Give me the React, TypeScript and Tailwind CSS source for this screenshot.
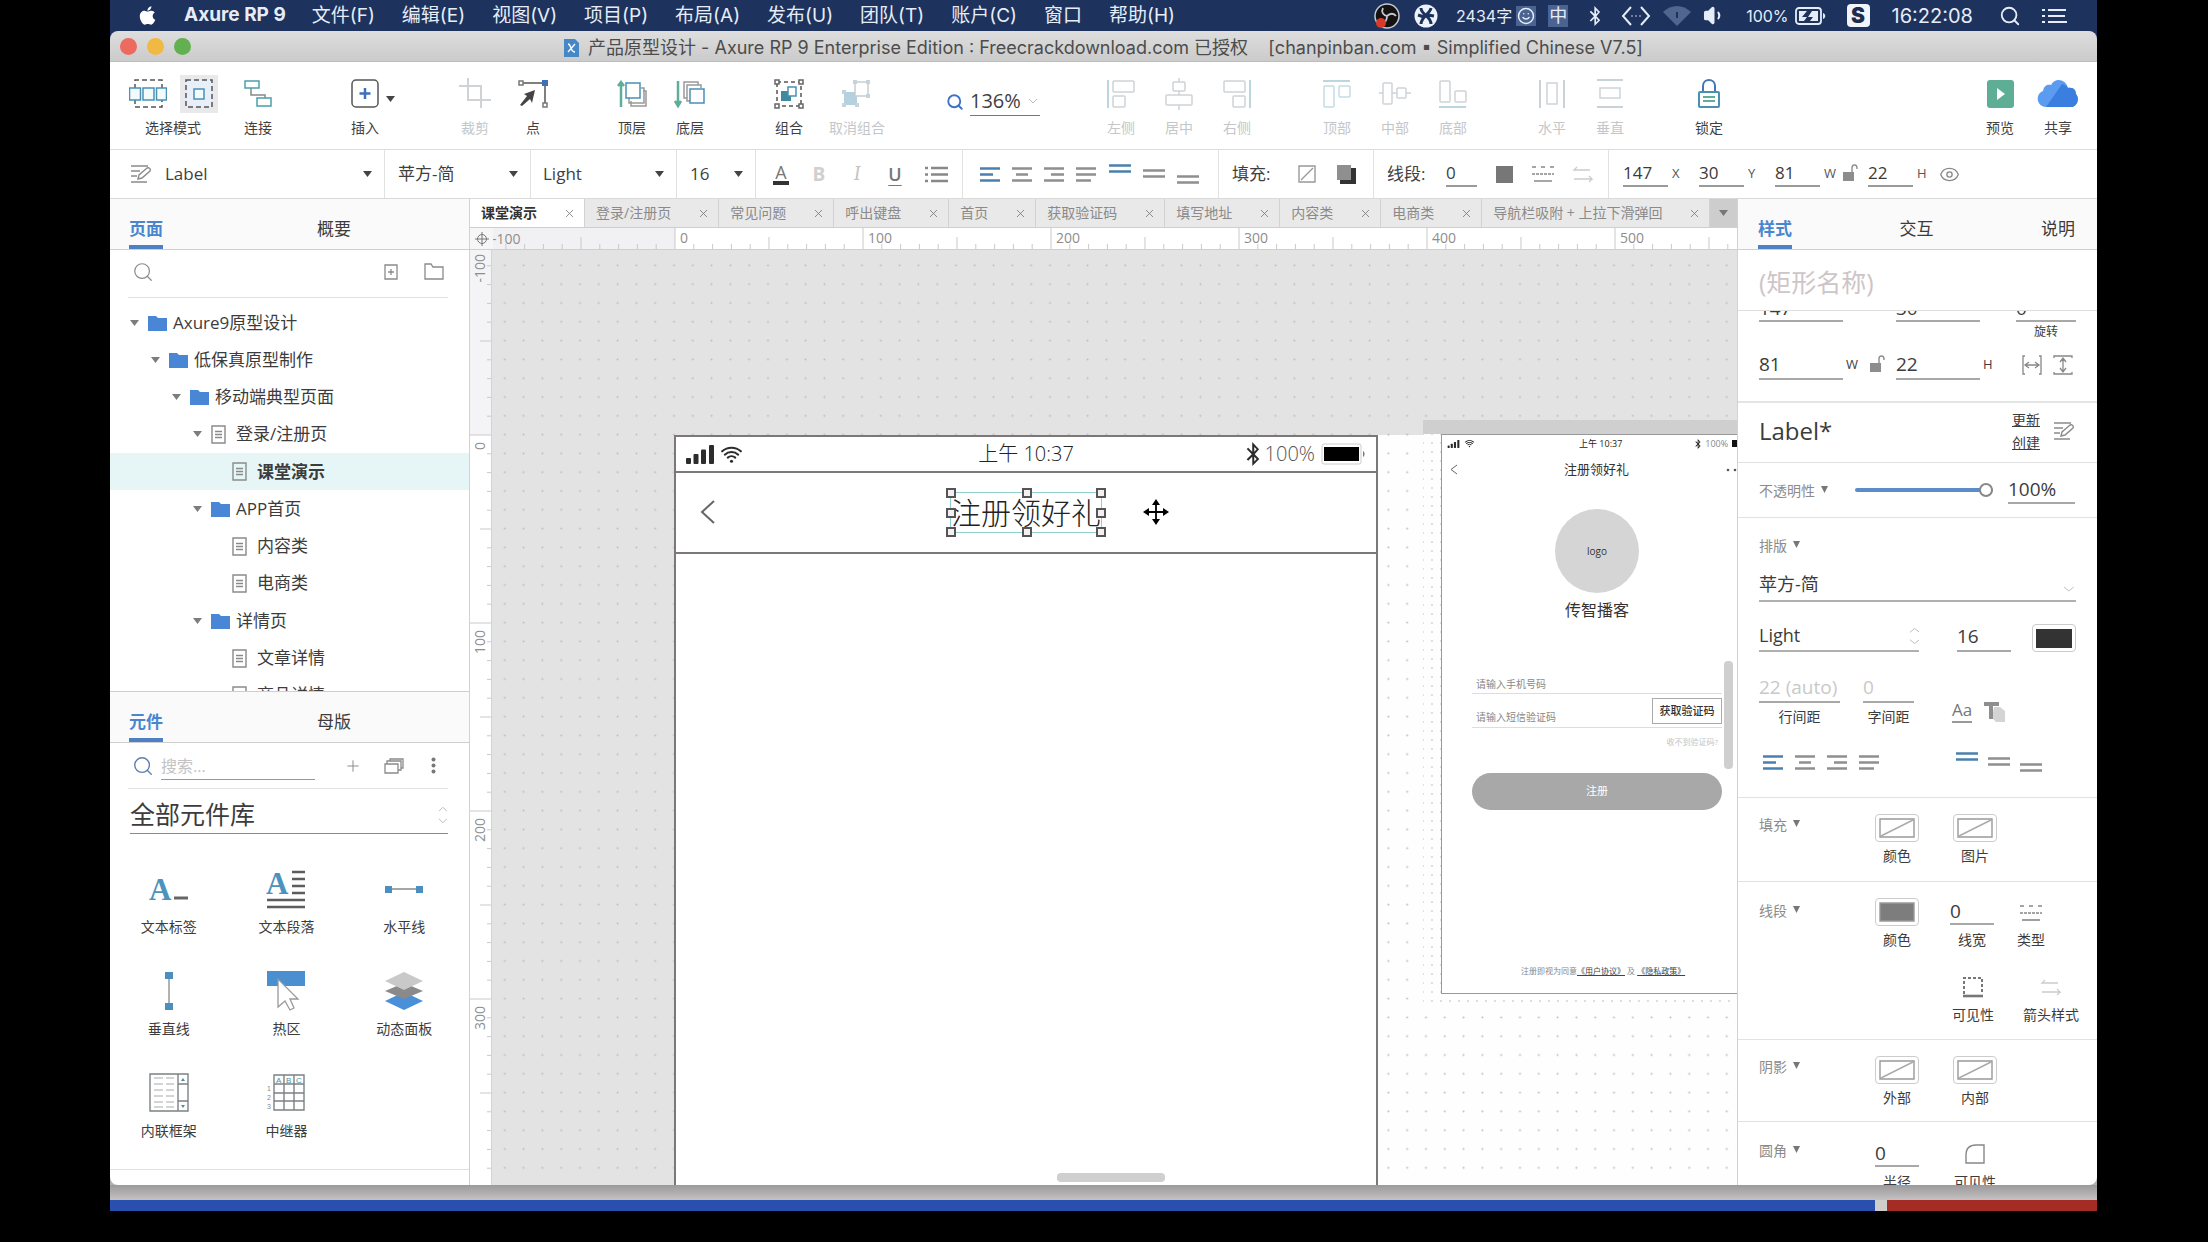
import React from 'react';
import { FaApple, FaBluetoothB } from 'react-icons/fa';
import { IoWifi } from 'react-icons/io5';
import { Search, Volume1, Plus, X, Eye, Smile } from 'lucide-react';

const menus = ['文件(F)', '编辑(E)', '视图(V)', '项目(P)', '布局(A)', '发布(U)', '团队(T)', '账户(C)', '窗口', '帮助(H)'];

const pageTabs = ['课堂演示', '登录/注册页', '常见问题', '呼出键盘', '首页', '获取验证码', '填写地址', '内容类', '电商类', '导航栏吸附 + 上拉下滑弹回'];

type TreeNode = { label: string; level: number; kind: 'folder' | 'page'; open?: boolean; active?: boolean };

const tree: TreeNode[] = [
  { label: 'Axure9原型设计', level: 0, kind: 'folder', open: true },
  { label: '低保真原型制作', level: 1, kind: 'folder', open: true },
  { label: '移动端典型页面', level: 2, kind: 'folder', open: true },
  { label: '登录/注册页', level: 3, kind: 'page', open: true },
  { label: '课堂演示', level: 4, kind: 'page', active: true },
  { label: 'APP首页', level: 3, kind: 'folder', open: true },
  { label: '内容类', level: 4, kind: 'page' },
  { label: '电商类', level: 4, kind: 'page' },
  { label: '详情页', level: 3, kind: 'folder', open: true },
  { label: '文章详情', level: 4, kind: 'page' },
  { label: '商品详情', level: 4, kind: 'page' },
];

// pixels per 10 canvas units at 136%
const STEP = 18.8;

const Caret = ({ className = 'text-[#444]' }: { className?: string }) => (
  <svg width="9" height="6" viewBox="0 0 9 6" className={`shrink-0 ${className}`}>
    <path d="M0 0h9L4.500 6z" fill="currentColor" />
  </svg>
);

const MenuBar = () => (
  <header className="flex h-[31px] shrink-0 items-center bg-[#1d325c] pl-[27px] pr-[29px] font-['Inter','Noto_Sans_CJK_SC',sans-serif] text-[19px] text-[#e6edf8]">
    <FaApple size={21} className="mr-[26px] text-white" />
    <b className="mr-[26px] whitespace-nowrap font-bold">Axure RP 9</b>
    <nav className="flex gap-[27px]">
      {menus.map((m) => (
        <button key={m} className="whitespace-nowrap leading-none">{m}</button>
      ))}
    </nav>
    <div className="ml-auto flex items-center">
      <svg width="26" height="26" viewBox="0 0 26 26">
        <circle cx="13" cy="13" r="12" fill="#151212" stroke="#c5c9d2" strokeWidth="1.500" />
        <path d="M13 13c-4-1-6-4-4-8M13 13c3-3 7-3 9 0M13 13c0 4-2 7-6 7" stroke="#c5c9d2" strokeWidth="1.800" fill="none" />
        <circle cx="7" cy="20" r="5" fill="#d8392b" />
      </svg>
      <svg width="24" height="24" viewBox="0 0 24 24" className="ml-[14px]">
        <circle cx="12" cy="12" r="11.500" fill="#eef3fb" />
        <path d="M7 4c0 7 10 8 10 16M17 4C16 10 7 13 7 20M4 11l6 2M14 11l6 1" stroke="#1d325c" strokeWidth="3" fill="none" />
      </svg>
      <span className="ml-[18px] text-[16px]">2434字</span>
      <span className="ml-[4px] bg-[#4b6391] p-px"><Smile size={18} /></span>
      <span className="ml-[12px] bg-[#4b6391] px-px text-[18px] leading-[22px]">中</span>
      <FaBluetoothB size={20} className="ml-[17px]" />
      <svg width="30" height="20" viewBox="0 0 30 20" className="ml-[16px]">
        <path d="M10 1L2 10l8 9M20 1l8 9-8 9" stroke="currentColor" strokeWidth="2" fill="none" />
        <path d="M10 10h10" stroke="#6d7fa5" strokeWidth="2" strokeDasharray="2 2" />
      </svg>
      <svg width="28" height="20" viewBox="0 0 28 20" className="ml-[12px]">
        <path d="M0 6C8-2 20-2 28 6L14 20z" fill="#52658f" />
        <path d="M13 6h2v6h-2z" fill="#1d325c" />
      </svg>
      <Volume1 size={23} fill="currentColor" className="ml-[12px]" />
      <span className="ml-[20px] text-[16px]">100%</span>
      <svg width="31" height="18" viewBox="0 0 31 18" className="ml-[6px]">
        <rect x="1" y="1" width="25" height="16" rx="3" fill="none" stroke="currentColor" strokeWidth="1.800" />
        <path d="M28 6v6c3-1 3-5 0-6M4 4h8l-5 6h5l-3 4H4zM23 4h-6l-4 6h5l-3 4h8z" fill="currentColor" />
      </svg>
      <span className="ml-[21px] w-[23px] rounded-[4px] bg-[#f1f5fb] text-center text-[21px] font-black leading-[23px] text-[#1d2c4c]">S</span>
      <span className="ml-[22px] text-[20px]">16:22:08</span>
      <Search size={22} className="ml-[26px]" />
      <svg width="26" height="16" viewBox="0 0 26 16" className="ml-[21px]">
        <path d="M0 2h3M6 2h18M0 8h3M6 8h17M0 14h3M6 14h19" stroke="currentColor" strokeWidth="2.200" />
      </svg>
    </div>
  </header>
);

const TitleBar = () => (
  <div className="flex h-[31px] shrink-0 items-center border-b border-[#bdbdbd] bg-gradient-to-b from-[#dedede] to-[#cbcbcb] px-[10px]">
    <div className="flex w-20 gap-[10px]">
      <span className="h-[17px] w-[17px] rounded-full bg-[#ec6a5e]" />
      <span className="h-[17px] w-[17px] rounded-full bg-[#f0b944]" />
      <span className="h-[17px] w-[17px] rounded-full bg-[#62b04f]" />
    </div>
    <h1 className="flex flex-1 items-center justify-center gap-[9px] whitespace-pre pt-[3px] font-['Inter','Noto_Sans_CJK_SC',sans-serif] text-[18px] leading-6 text-[#4c4c4c]">
      <svg width="15" height="19" viewBox="0 0 15 19">
        <path d="M0 1h11l4 4v14H0z" fill="#4687c8" />
        <path d="M4 6c1 0 2 1 3 4s2 4 4 4M11 6L4 14" stroke="#fff" strokeWidth="1.300" fill="none" />
      </svg>
      {'产品原型设计 - Axure RP 9 Enterprise Edition : Freecrackdownload.com 已授权    [chanpinban.com ▪ Simplified Chinese V7.5]'}
    </h1>
    <div className="w-20" />
  </div>
);

const Tool = ({ label, off, wide, children }: { label: string; off?: boolean; wide?: boolean; children: React.ReactNode }) => (
  <button disabled={off} className={`flex shrink-0 flex-col items-center ${wide ? 'w-[78px]' : 'w-[58px]'} ${off ? 'text-[#c4c7ca]' : 'text-[#3f3f3f]'}`}>
    <svg width="32" height="32" viewBox="0 0 32 32" fill="none" strokeWidth="1.500" className="h-[38px]">{children}</svg>
    <span className="mt-[5px] whitespace-nowrap text-[14px] leading-5">{label}</span>
  </button>
);

const Toolbar = () => (
  <div className="flex h-[88px] shrink-0 items-start gap-[41px] border-b border-[#dedede] bg-white pl-[7px] pr-[10px] pt-[13px]">
    <div className="flex shrink-0">
      <div className="flex w-[112px] flex-col items-center text-[#3f3f3f]">
        <div className="flex gap-[13px]">
          <button aria-label="相交选中">
            <svg width="38" height="38" viewBox="0 0 38 38" fill="none" strokeWidth="1.500">
              <path d="M6 14V5h27v9M6 24v8h27v-8" stroke="#555" strokeDasharray="5 3" />
              <path d="M0.500 13h11v12h-11zM14 13h11v12h-11zM27.500 13h10v12h-10z" stroke="#4a90b5" fill="#f3fafc" />
            </svg>
          </button>
          <button aria-label="包含选中" className="bg-[#e9e9ec]">
            <svg width="38" height="38" viewBox="0 0 38 38" fill="none" strokeWidth="1.500">
              <rect x="6" y="5" width="26" height="27" fill="#e9eff9" stroke="#555" strokeDasharray="5 3" />
              <rect x="14" y="14" width="10" height="10" stroke="#4a90b5" fill="#f3fafc" />
            </svg>
          </button>
        </div>
        <span className="mt-[5px] text-[14px] leading-5">选择模式</span>
      </div>
      <Tool label="连接">
        <path d="M9 9v8h14v5" stroke="#888" />
        <path d="M3 3h14v7H3zM15 20h14v8H15z" stroke="#4c9fa8" fill="#fff" />
      </Tool>
    </div>
    <div className="ml-[8px] flex shrink-0">
      <Tool label="插入">
        <rect x="3" y="2" width="26" height="27" rx="4" stroke="#555" />
        <path d="M16 10v11M10.500 15.500h11" stroke="#3f6fb8" strokeWidth="2.500" />
      </Tool>
      <div className="-ml-2 flex h-12 items-center"><Caret /></div>
    </div>
    <div className="ml-[10px] flex shrink-0">
      <Tool label="裁剪" off>
        <path d="M9 0v22h23M0 8h22v22" stroke="#cfd3d6" strokeWidth="2" />
      </Tool>
      <Tool label="点">
        <path d="M4 5h24v21" stroke="#555" />
        <path d="M2 3h4v4H2zM26 25h4v4h-4z" stroke="#777" fill="#fff" />
        <path d="M25 2h6v6h-6z" fill="#3f6fb8" />
        <path d="M18 12L7 16l3 2-7 9 2 1 8-7 2 4z" fill="#444" />
      </Tool>
    </div>
    <div className="flex shrink-0">
      <Tool label="顶层">
        <path d="M5 29V5M2 8l3-4 3 4" stroke="#5fae9a" strokeWidth="2.500" />
        <path d="M15 23v5h15V13h-3M13 20v5h15V10h-3" stroke="#999" />
        <path d="M10 5h14v15H10z" stroke="#4a90b5" fill="#fff" />
      </Tool>
      <Tool label="底层">
        <path d="M4 3v23M1 23l3 5 3-5" stroke="#5fae9a" strokeWidth="2.500" />
        <path d="M13 20h-3V4h14v3M16 23h-3V7h14v3" stroke="#999" />
        <path d="M16 11h14v14H16z" stroke="#4a90b5" fill="#fff" />
      </Tool>
    </div>
    <div className="flex shrink-0">
      <Tool label="组合">
        <path d="M4 4h24v24H4z" stroke="#555" strokeDasharray="4 3" />
        <path d="M2 2h4v4H2zM26 2h4v4h-4zM2 26h4v4H2zM26 26h4v4h-4z" stroke="#666" fill="#fff" />
        <path d="M8 13h10v10H8z" fill="#3f8aa0" />
        <path d="M15 9h8v9h-8z" stroke="#4a90b5" fill="#fff" />
      </Tool>
      <Tool label="取消组合" off wide>
        <path d="M3 14h13v13H3z" fill="#b5d0de" />
        <path d="M14 4h13v14H14z" stroke="#c9cdd0" fill="#fff" />
        <path d="M12 2h4v4h-4zM25 2h4v4h-4zM25 16h4v4h-4zM1 12h4v4H1zM1 25h4v4H1zM14 25h4v4h-4z" fill="#c5d3da" />
      </Tool>
    </div>
    <label className="ml-[9px] mt-[12px] flex shrink-0 items-center gap-[6px] text-[#3f3f3f]">
      <Search size={18} className="text-[#3f72c0]" strokeWidth={2.500} />
      <span className="flex w-[70px] items-center border-b border-[#777]">
        <input aria-label="缩放" defaultValue="136%" className="h-[28px] w-[58px] bg-transparent text-[20px] outline-none" />
        <svg width="10" height="6" viewBox="0 0 10 6"><path d="M1 1l4 4 4-4" stroke="#bbb" fill="none" /></svg>
      </span>
    </label>
    <div className="ml-[11px] flex shrink-0">
      <Tool label="左侧" off>
        <path d="M3 2v28" stroke="#bcd6df" strokeWidth="2" />
        <rect x="8" y="3" width="21" height="11" rx="1" stroke="#cfd3d6" /><rect x="8" y="18" width="12" height="11" rx="1" stroke="#cfd3d6" />
      </Tool>
      <Tool label="居中" off>
        <path d="M16 0v32" stroke="#c3d4da" />
        <rect x="10" y="4" width="12" height="9" rx="1" stroke="#cfd3d6" fill="#fff" /><rect x="3" y="17" width="26" height="10" rx="1" stroke="#cfd3d6" fill="#fff" />
      </Tool>
      <Tool label="右侧" off>
        <path d="M29 2v28" stroke="#bcd6df" strokeWidth="2" />
        <rect x="3" y="3" width="21" height="11" rx="1" stroke="#cfd3d6" /><rect x="12" y="18" width="12" height="11" rx="1" stroke="#cfd3d6" />
      </Tool>
    </div>
    <div className="ml-px flex shrink-0">
      <Tool label="顶部" off>
        <path d="M2 3h27" stroke="#bcd6df" strokeWidth="2" />
        <rect x="3" y="8" width="10" height="21" rx="1" stroke="#c5dbe3" /><rect x="18" y="8" width="11" height="11" rx="1" stroke="#c5dbe3" />
      </Tool>
      <Tool label="中部" off>
        <path d="M0 15h32" stroke="#c3d4da" />
        <rect x="4" y="5" width="9" height="21" rx="1" stroke="#cfd3d6" fill="#fff" /><rect x="18" y="10" width="9" height="10" rx="1" stroke="#cfd3d6" fill="#fff" />
      </Tool>
      <Tool label="底部" off>
        <path d="M2 29h27" stroke="#bcd6df" strokeWidth="2" />
        <rect x="3" y="3" width="10" height="21" rx="1" stroke="#cfd3d6" /><rect x="18" y="13" width="11" height="11" rx="1" stroke="#cfd3d6" />
      </Tool>
    </div>
    <div className="flex shrink-0">
      <Tool label="水平" off>
        <path d="M4 2v28M28 2v28" stroke="#c9d2d6" strokeWidth="2" />
        <rect x="11" y="5" width="10" height="21" stroke="#cfd3d6" />
      </Tool>
      <Tool label="垂直" off>
        <path d="M3 2h26M3 29h26" stroke="#c9d2d6" strokeWidth="2" />
        <rect x="6" y="10" width="20" height="10" stroke="#cfd3d6" />
      </Tool>
    </div>
    <Tool label="锁定">
      <path d="M10 14V8c0-8 12-8 12 0v6" stroke="#4177b5" strokeWidth="2" />
      <rect x="6" y="14" width="20" height="15" rx="1" stroke="#4a90b5" strokeWidth="2" />
      <path d="M10 19h12M10 23h12" stroke="#5fae9a" strokeWidth="2" />
    </Tool>
    <div className="ml-auto flex shrink-0">
      <Tool label="预览">
        <rect x="3" y="2" width="27" height="28" rx="3" fill="#5dae94" />
        <path d="M13 10v12l8-6z" fill="#fff" />
      </Tool>
      <button className="flex w-[58px] flex-col items-center text-[#3f3f3f]">
        <svg width="42" height="38" viewBox="0 0 42 38">
          <path d="M9 32C-2 31-1 18 6 16c1-6 5-7 8-6 4-8 15-6 17 3 6-1 8 3 8 6 4 5 1 12-4 13z" fill="#5b9cf0" />
          <path d="M9 32L25 9c3 1 5 2 6 4 6-1 8 3 8 6 4 5 1 12-4 13z" fill="#3a7fdf" />
        </svg>
        <span className="mt-[5px] text-[14px] leading-5">共享</span>
      </button>
    </div>
  </div>
);

const FormatSelect = ({ label, value, className }: { label: string; value: string; className: string }) => (
  <div className={`relative flex h-full shrink-0 items-center border-r border-[#e2e2e2] pr-3 ${className}`}>
    <select aria-label={label} defaultValue={value} className="w-full appearance-none bg-transparent text-[17px] text-[#3f3f3f] outline-none">
      <option>{value}</option>
    </select>
    <Caret />
  </div>
);

const EditStyleIcon = () => (
  <svg width="21" height="20" viewBox="0 0 21 20" fill="none" stroke="#8b8b8b" strokeWidth="1.400" className="shrink-0">
    <path d="M1 2h17M1 7h9M1 12h6M1 18h16M8 15l1-4 8-7c2-1 4 1 3 3l-8 7z" />
  </svg>
);

const lineIcons = {
  left: 'M0 1.500h20M0 7.500h13M0 13.500h20',
  center: 'M0 1.500h20M4 7.500h12M0 13.500h20',
  right: 'M0 1.500h20M7 7.500h13M0 13.500h20',
  justify: 'M0 1.500h20M0 7.500h20M0 13.500h15',
  top: 'M0 1.500h22M0 7.500h22',
  middle: 'M0 6.500h22M0 12.500h22',
  bottom: 'M0 12.500h22M0 18.500h22',
};

const AlignButton = ({ kind, label, on }: { kind: keyof typeof lineIcons; label: string; on?: boolean }) => {
  const vertical = kind === 'top' || kind === 'middle' || kind === 'bottom';
  return (
    <button aria-label={label} className={on ? 'text-[#4a80ae]' : 'text-[#8f8f8f]'}>
      <svg width={vertical ? 22 : 20} height={vertical ? 20 : 15} viewBox={vertical ? '0 0 22 20' : '0 0 20 15'}>
        <path d={lineIcons[kind]} stroke="currentColor" strokeWidth="2.600" fill="none" />
      </svg>
    </button>
  );
};

const Unlock = () => (
  <svg width="15" height="20" viewBox="0 0 15 20" className="shrink-0">
    <path d="M0 8h11v9H0z" fill="#8d8d8d" />
    <path d="M9 8V4c0-4 5-4 5 0v1" stroke="#8d8d8d" fill="none" strokeWidth="1.400" />
  </svg>
);

const DashLines = () => (
  <svg width="22" height="18" viewBox="0 0 22 18" stroke="#888" strokeWidth="1.600">
    <path d="M0 2h22" strokeDasharray="4 5" /><path d="M0 9h22" strokeDasharray="3 1" /><path d="M2 16h18" />
  </svg>
);

const Arrows = () => (
  <svg width="22" height="18" viewBox="0 0 22 18" stroke="#ccc" strokeWidth="1.300" fill="none">
    <path d="M18 5H2l3-3M2 14h18l-3-3M20 14l-3 3" />
  </svg>
);

const BarField = ({ label, value }: { label: string; value: string }) => (
  <label className="flex shrink-0 items-center gap-1 text-[13px] text-[#555]">
    <input defaultValue={value} className="h-[25px] w-[45px] border-b-2 border-[#9a9a9a] bg-transparent text-[17px] text-[#3a3a3a] outline-none" />
    <span className="w-[12px]">{label}</span>
  </label>
);

const FormatBar = () => (
  <div className="flex h-[49px] shrink-0 items-center border-b border-[#d9d9d9] bg-white">
    <div className="flex h-full shrink-0 items-center pl-[20px]"><EditStyleIcon /></div>
    <FormatSelect label="样式" value="Label" className="w-[234px] pl-[14px]" />
    <FormatSelect label="字体" value="苹方-简" className="w-[146px] pl-[13px]" />
    <FormatSelect label="字重" value="Light" className="w-[146px] pl-[12px]" />
    <FormatSelect label="字号" value="16" className="w-[79px] pl-[13px]" />
    <div className="flex h-full w-[207px] shrink-0 items-center justify-between border-r border-[#e2e2e2] pl-[17px] pr-[14px]">
      <button aria-label="文字颜色" className="w-[16px] border-b-4 border-[#333] text-[18px] leading-[17px] text-[#777]">A</button>
      <button className="w-4 text-[19px] font-bold text-[#d0d0d0]">B</button>
      <button className="w-4 font-serif text-[20px] italic text-[#c4c4c4]">I</button>
      <button className="w-4 text-[18px] font-semibold leading-5 text-[#777] underline underline-offset-4">U</button>
      <button aria-label="列表">
        <svg width="23" height="17" viewBox="0 0 23 17" stroke="#888" strokeWidth="2.400">
          <path d="M0 2h3M6 2h17M0 8.500h3M6 8.500h17M0 15h3M6 15h17" />
        </svg>
      </button>
    </div>
    <div className="flex h-full w-[256px] shrink-0 items-center justify-between border-r border-[#e2e2e2] pl-[17px] pr-[19px]">
      <AlignButton kind="left" label="左对齐" on />
      <AlignButton kind="center" label="居中对齐" />
      <AlignButton kind="right" label="右对齐" />
      <AlignButton kind="justify" label="两端对齐" />
      <AlignButton kind="top" label="顶部对齐" on />
      <AlignButton kind="middle" label="垂直居中" />
      <AlignButton kind="bottom" label="底部对齐" />
    </div>
    <div className="flex h-full w-[155px] shrink-0 items-center border-r border-[#e2e2e2] pl-[13px] text-[17px] text-[#3f3f3f]">
      填充:
      <button aria-label="填充颜色" className="ml-auto">
        <svg width="18" height="18" viewBox="0 0 18 18" stroke="#999" strokeWidth="1.400" fill="none"><path d="M1 1h16v16H1zM3 15L15 3" /></svg>
      </button>
      <button aria-label="阴影" className="ml-[21px] mr-[17px]">
        <svg width="19" height="19" viewBox="0 0 19 19"><path d="M3 3h16v16H3z" fill="#333" /><path d="M0 0h14v15H0z" fill="#8f8f8f" /></svg>
      </button>
    </div>
    <div className="flex h-full w-[235px] shrink-0 items-center border-r border-[#e2e2e2] pl-[13px] pr-[14px] text-[17px] text-[#3f3f3f]">
      <label htmlFor="bar-line">线段:</label>
      <input id="bar-line" defaultValue="0" className="ml-auto h-[25px] w-[31px] border-b-2 border-[#9a9a9a] bg-transparent outline-none" />
      <button aria-label="线段颜色" className="ml-[19px] h-[17px] w-[17px] bg-[#777]" />
      <button aria-label="线段类型" className="ml-[19px]"><DashLines /></button>
      <button aria-label="箭头样式" className="ml-[18px]"><Arrows /></button>
    </div>
    <div className="flex h-full items-center gap-[15px] pl-[14px]">
      <BarField label="X" value="147" />
      <BarField label="Y" value="30" />
      <BarField label="W" value="81" />
      <div className="-ml-2 flex items-center gap-[10px]">
        <Unlock />
        <BarField label="H" value="22" />
        <Eye size={21} strokeWidth={1.500} className="text-[#888]" />
      </div>
    </div>
  </div>
);

const Tree = () => (
  <ul className="flex h-[410px] flex-col">
    {tree.map((n) => (
      <li key={n.label} className={`flex flex-1 items-center pr-1 ${n.active ? 'bg-[#e6f6f6] font-bold' : ''}`}>
        <button className="flex items-center whitespace-nowrap text-[17px] leading-6 text-[#3c3c3c]" style={{ paddingLeft: 20 + n.level * 21 }}>
          <span className="w-[18px]">{n.open && <Caret className="text-[#7d7d7d]" />}</span>
          {n.kind === 'folder' ? (
            <svg width="25" height="16" viewBox="0 0 25 16"><path d="M0 1h8l2 2h9v13H0z" fill="#4a86d6" /></svg>
          ) : (
            <svg width="25" height="19" viewBox="0 0 25 19" fill="none" stroke="#8a8a8a" strokeWidth="1.400">
              <path d="M1 1h13v17H1zM4 6.500h7M4 9.500h7M4 12.500h7" />
            </svg>
          )}
          {n.label}
        </button>
      </li>
    ))}
  </ul>
);

const Widget = ({ label, children }: { label: string; children: React.ReactNode }) => (
  <button className="flex flex-col items-center text-[#3c3c3c]">
    <svg width="40" height="40" viewBox="0 0 40 40" fill="none">{children}</svg>
    <span className="mt-[8px] text-[14px] leading-5">{label}</span>
  </button>
);

const LeftPanel = () => (
  <aside className="flex w-[360px] shrink-0 flex-col border-r border-[#d2d2d2] bg-white text-[#3c3c3c]">
    <div className="flex h-[51px] shrink-0 items-end border-b border-[#cfcfcf] bg-[#fafafa] px-[19px] text-[17px]">
      <button className="border-b-4 border-[#4f7fc4] pb-[2px] font-semibold leading-7 text-[#4a86d0]">页面</button>
      <button className="ml-[154px] pb-[6px] leading-7">概要</button>
    </div>
    <div className="h-[441px] min-h-0 overflow-hidden">
      <div className="mb-[6px] ml-[18px] mr-[21px] flex h-[48px] items-center border-b border-[#e2e2e2] pb-1 pl-[4px] text-[#8a8a8a]">
        <button aria-label="搜索页面"><Search size={22} strokeWidth={1.300} /></button>
        <button aria-label="添加页面" className="ml-auto">
          <svg width="14" height="16" viewBox="0 0 14 16" fill="none" stroke="currentColor" strokeWidth="1.300"><path d="M1 1h12v14H1zM7 5v6M4 8h6" /></svg>
        </button>
        <button aria-label="添加文件夹" className="ml-[26px] mr-[4px]">
          <svg width="20" height="17" viewBox="0 0 20 17" fill="none" stroke="currentColor" strokeWidth="1.300"><path d="M1 1h6l2 3h10v12H1z" /></svg>
        </button>
      </div>
      <Tree />
    </div>
    <div className="flex h-[52px] shrink-0 items-end border-y border-[#cfcfcf] bg-[#fafafa] px-[19px] text-[17px]">
      <button className="border-b-4 border-[#4f7fc4] pb-[2px] font-semibold leading-7 text-[#4a86d0]">元件</button>
      <button className="ml-[154px] pb-[6px] leading-7">母版</button>
    </div>
    <div className="ml-[18px] mr-[21px] flex h-[46px] shrink-0 items-center border-b border-[#e2e2e2] pl-[4px] text-[#8a8a8a]">
      <Search size={22} strokeWidth={1.500} className="text-[#5a7fae]" />
      <input aria-label="搜索元件" placeholder="搜索..." className="ml-[7px] mt-[2px] h-[26px] w-[154px] border-b border-[#8a9aa8] text-[16px] outline-none placeholder:text-[#c2c2c2]" />
      <button aria-label="添加元件库" className="ml-auto"><Plus size={18} strokeWidth={1.300} /></button>
      <button aria-label="元件库" className="ml-[22px]">
        <svg width="20" height="16" viewBox="0 0 20 16" fill="none" stroke="currentColor" strokeWidth="1.300"><path d="M1 6h13v9H1zM3 6V3h14v9h-3M6 3V1h13v9h-2" /></svg>
      </button>
      <button aria-label="更多" className="ml-[27px] mr-[12px]">
        <svg width="5" height="17" viewBox="0 0 5 17"><circle cx="2.500" cy="2.500" r="2" fill="#777" /><circle cx="2.500" cy="8.500" r="2" fill="#777" /><circle cx="2.500" cy="14.500" r="2" fill="#777" /></svg>
      </button>
    </div>
    <div className="ml-[20px] mr-[21px] mt-[8px] flex h-[37px] shrink-0 items-center border-b border-[#8a8a8a]">
      <select aria-label="元件库" className="w-full appearance-none bg-transparent text-[25px] outline-none"><option>全部元件库</option></select>
      <svg width="10" height="18" viewBox="0 0 10 18" fill="none" stroke="#bbb"><path d="M1 5l4-4 4 4M1 13l4 4 4-4" /></svg>
    </div>
    <div className="mt-[35px] grid shrink-0 grid-cols-3 gap-y-[34px] pr-[6px]">
      <Widget label="文本标签">
        <text x="0" y="31" fontSize="31" fontWeight="bold" fontFamily="Liberation Serif" fill="#4d92bd">A</text>
        <path d="M25 29h14" stroke="#666" strokeWidth="3" />
      </Widget>
      <Widget label="文本段落">
        <text x="0" y="25" fontSize="31" fontWeight="bold" fontFamily="Liberation Serif" fill="#4d92bd">A</text>
        <path d="M26 3h13M26 10h13M26 17h13M26 24h13M1 31h38M1 38h38" stroke="#5d5d5d" strokeWidth="2.400" />
      </Widget>
      <Widget label="水平线">
        <path d="M4 20h32" stroke="#888" strokeWidth="1.500" /><path d="M1 17h7v7H1zM32 17h7v7h-7z" fill="#4a8fc0" />
      </Widget>
      <Widget label="垂直线">
        <path d="M20 4v32" stroke="#999" strokeWidth="1.500" /><path d="M16 1h8v7h-8zM16 32h8v7h-8z" fill="#4a8fc0" />
      </Widget>
      <Widget label="热区">
        <path d="M1 0h38v15H1z" fill="#4a90d0" />
        <path d="M12 8v28l7-6 5 9 4-2-4-9h8z" fill="#fff" stroke="#999" strokeWidth="1.300" />
      </Widget>
      <Widget label="动态面板">
        <path d="M1 30l19-9 19 9-19 9z" fill="#4a90d9" /><path d="M1 20l19-8 19 8-19 8z" fill="#8a8a8a" /><path d="M1 10l19-9 19 9-19 9z" fill="#c9c9c9" />
      </Widget>
      <Widget label="内联框架">
        <path d="M1 1h38v37H1zM29 1v37M29 11h10M29 28h10" stroke="#7b8284" strokeWidth="1.400" />
        <path d="M5 5h9M17 5h8M5 11h9M17 11h8M5 17h9M17 17h8M5 23h9M17 23h8M5 29h9M17 29h8M5 34h9M17 34h8" stroke="#aaa" />
        <path d="M32 8l2-3 2 3zM32 32l2 3 2-3z" fill="#4a8f9f" />
      </Widget>
      <Widget label="中继器">
        <path d="M8 2h30v35H8zM8 11h30M8 20h30M8 28h30M18 2v35M28 2v35" stroke="#7b8284" strokeWidth="1.400" />
        <text fontSize="8" fontFamily="Liberation Sans" fill="#4a8f9f"><tspan x="10" y="9.500">A</tspan><tspan x="20" y="9.500">B</tspan><tspan x="30" y="9.500">C</tspan></text>
        <text fontSize="7" fontFamily="Liberation Sans" fill="#888"><tspan x="1" y="18">1</tspan><tspan x="1" y="27">2</tspan><tspan x="1" y="36">3</tspan></text>
      </Widget>
    </div>
    <div className="mt-auto h-[16px] shrink-0 border-t border-[#e0e0e0]" />
  </aside>
);

const HRuler = () => (
  <svg height="21" className="block w-full bg-white" fontFamily="Open Sans" fontSize="14" fill="#8d8d8d" stroke="none">
    <rect width="182" height="21" fill="#f1f1f4" />
    {Array.from({ length: 68 }, (_, i) => {
      const n = i - 9;
      const x = 182 + n * STEP;
      const major = n % 10 === 0;
      const size = major ? 21 : n % 5 === 0 ? 12 : 5;
      return <path key={n} d={`M${x} ${21 - size}v${size}`} stroke="#c9c9c9" />;
    })}
    <text x="-1" y="16">-100</text>
    {[0, 100, 200, 300, 400, 500].map((v) => (
      <text key={v} x={187 + (v / 10) * STEP} y="15">{v}</text>
    ))}
  </svg>
);

const VRuler = () => (
  <svg width="22" className="block h-full shrink-0 border-r border-[#d4d4d4] bg-white" fontFamily="Open Sans" fontSize="14" fill="#8d8d8d">
    <rect width="22" height="185" fill="#f4f4f6" />
    {Array.from({ length: 50 }, (_, i) => {
      const n = i - 9;
      const y = 185 + n * STEP;
      const size = n % 10 === 0 ? 22 : n % 5 === 0 ? 12 : 5;
      return <path key={n} d={`M${22 - size} ${y}h${size}`} stroke="#c9c9c9" />;
    })}
    {[-100, 0, 100, 200, 300].map((v) => (
      <text key={v} transform={`translate(15 ${192 + (v / 10) * STEP}) rotate(-90)`} textAnchor="end">{v}</text>
    ))}
  </svg>
);

const Bars = ({ className }: { className: string }) => (
  <svg viewBox="0 0 28 19" className={className} fill="#2c2c2c">
    <rect y="13" width="5" height="6" rx="1" /><rect x="7.500" y="9" width="5" height="10" rx="1" /><rect x="15" y="4.500" width="5" height="14.500" rx="1" /><rect x="23" width="5" height="19" rx="1" />
  </svg>
);

const handles = ['left-[-5px] top-[-5px]', 'left-[71px] top-[-5px]', 'right-[-5px] top-[-5px]', 'left-[-5px] top-[15px]', 'right-[-5px] top-[15px]', 'left-[-5px] bottom-[-5px]', 'left-[71px] bottom-[-5px]', 'right-[-5px] bottom-[-5px]'];

const PhoneFrame = () => (
  <div className="absolute bottom-0 left-[182px] top-[185px] w-[704px] border-2 border-b-0 border-[#7d7878] bg-white">
    <div className="flex h-[36px] items-center border-b-2 border-[#7d7878] px-[10px] text-[#2c2c2c]">
      <div className="flex flex-1 items-center gap-[5px]"><Bars className="h-[19px] w-[28px]" /><IoWifi size={25} /></div>
      <span className="text-[20px] font-light text-[#222]">上午 10:37</span>
      <div className="flex flex-1 items-center justify-end gap-[3px]">
        <FaBluetoothB size={24} className="-mr-[3px]" />
        <span className="text-[20px] font-light text-[#555]">100%</span>
        <svg width="48" height="22" viewBox="0 0 48 22">
          <rect x="4" y="1" width="39" height="20" rx="2" fill="#fff" stroke="#ccc" /><path d="M6 4h35v14H6z" /><path d="M45 8c2 1 2 5 0 6z" fill="#777" />
        </svg>
      </div>
    </div>
    <div className="flex h-[81px] items-center justify-center border-b-2 border-[#7d7878] pb-px">
      <svg width="16" height="24" viewBox="0 0 16 24" className="absolute left-[24px]"><path d="M14 1L2 12l12 11" stroke="#666" strokeWidth="2" fill="none" /></svg>
      <div className="relative flex h-[41px] w-[152px] items-center justify-center border border-[#8fd0cf] pb-[3px]">
        <span className="whitespace-nowrap font-['Noto_Sans_CJK_SC',sans-serif] text-[30px] font-light leading-[36px] text-[#222]">注册领好礼</span>
        {handles.map((h) => (
          <i key={h} className={`absolute h-[10px] w-[10px] border-2 border-[#555] bg-[#f6eff1] ${h}`} />
        ))}
      </div>
      <svg width="26" height="26" viewBox="0 0 26 26" className="absolute left-[467px]">
        <path d="M13 0l4 6H9zM13 26l4-6H9zM0 13l6-4v8zM26 13l-6-4v8z" /><path d="M13 4v18M4 13h18" stroke="#000" strokeWidth="1.800" />
      </svg>
    </div>
  </div>
);

const PreviewPhone = () => (
  <div className="absolute left-[949px] top-[184px] h-[560px] w-[313px] border border-[#999] bg-white text-[#333]">
    <div className="flex h-[17px] items-center pl-[5px] text-[#222]">
      <Bars className="h-[8px] w-[13px]" /><IoWifi size={11} className="ml-[4px]" />
      <span className="ml-[104px] text-[9px]">上午 10:37</span>
      <FaBluetoothB size={10} className="ml-[71px]" />
      <span className="ml-[2px] text-[9px] text-[#888]">100%</span>
      <i className="ml-[4px] h-[7px] w-[14px] bg-[#111]" />
    </div>
    <div className="flex h-[35px] items-center pl-[8px]">
      <svg width="8" height="11" viewBox="0 0 8 11"><path d="M7 1L1 5.500 7 10" stroke="#666" fill="none" /></svg>
      <span className="ml-[106px] text-[13px]">注册领好礼</span>
      <svg width="16" height="4" viewBox="0 0 16 4" className="ml-[97px]"><circle cx="2" cy="2" r="1.300" fill="#555" /><circle cx="9" cy="2" r="1.300" fill="#555" /></svg>
    </div>
    <div className="ml-[30px] flex w-[250px] flex-col pt-[22px]">
      <div className="mx-auto flex h-[84px] w-[84px] items-center justify-center rounded-full bg-[#d5d5d5] text-[10px]">logo</div>
      <p className="mt-[5px] text-center text-[16px] leading-6">传智播客</p>
      <input aria-label="手机号码" placeholder="请输入手机号码" className="mt-[52px] h-[20px] border-b border-[#ddd] px-[4px] text-[10px] placeholder:text-[#888]" />
      <div className="flex h-[34px] items-end border-b border-[#ddd]">
        <input aria-label="短信验证码" placeholder="请输入短信验证码" className="h-[20px] min-w-0 flex-1 px-[4px] text-[10px] placeholder:text-[#888]" />
        <button className="mb-[3px] h-[26px] w-[70px] border border-[#aaa] text-[11px] font-medium">获取验证码</button>
      </div>
      <a href="#help" className="pr-[4px] pt-[6px] text-right text-[8px] leading-4 text-[#c4c4c4]">收不到验证码?</a>
      <button className="mt-[23px] h-[37px] rounded-full bg-[#a8a8a8] text-[11px] text-white">注册</button>
    </div>
    <p className="ml-[79px] mt-[153px] whitespace-nowrap text-[8px] leading-4 text-[#888]">
      注册即视为同意<a href="#terms" className="text-[#444] underline">《用户协议》</a> 及 <a href="#privacy" className="text-[#444] underline">《隐私政策》</a>
    </p>
  </div>
);

const Canvas = () => (
  <main className="flex min-w-0 flex-1 flex-col">
    <div className="flex h-[29px] shrink-0 overflow-hidden border-b border-[#cfcfcf] bg-[#e9e9e9] text-[14px] text-[#8a8a8a]">
      {pageTabs.map((t, i) => (
        <div key={t} className={`flex shrink-0 items-center gap-[26px] border-r border-[#d2d2d2] pl-[11px] pr-[8px] ${i === 0 ? 'bg-white font-bold text-[#333]' : ''}`}>
          <button className="whitespace-nowrap leading-5">{t}</button>
          <button aria-label={`关闭 ${t}`} className="text-[#777]"><X size={13} strokeWidth={1.500} /></button>
        </div>
      ))}
      <button aria-label="全部标签" className="ml-auto flex w-[31px] items-center justify-center bg-[#cdcdcd]"><Caret className="text-[#777]" /></button>
    </div>
    <div className="flex h-[22px] shrink-0 border-b border-[#cfcfcf] bg-[#f6f6f6]">
      <div className="flex w-[23px] shrink-0 items-center justify-center">
        <svg width="14" height="14" viewBox="0 0 14 14" stroke="#777" fill="none"><circle cx="7" cy="7" r="4.500" /><path d="M7 0v14M0 7h14" /></svg>
      </div>
      <div className="min-w-0 flex-1"><HRuler /></div>
    </div>
    <div className="flex min-h-0 flex-1">
      <VRuler />
      <div className="relative min-w-0 flex-1 overflow-hidden bg-[#e3e3e3]">
        <div className="absolute bottom-0 left-[182px] right-0 top-[185px] bg-[#fefefe]" />
        <svg className="absolute inset-0 h-full w-full">
          <defs>
            <pattern id="grid" width={STEP} height={STEP} patternUnits="userSpaceOnUse" x="3.400" y="6">
              <circle cx={STEP / 2} cy={STEP / 2} r="1" fill="#bcbcbc" />
            </pattern>
            <pattern id="grid-small" width="9" height="9" patternUnits="userSpaceOnUse">
              <circle cx="4" cy="4" r="0.900" fill="#cfcfcf" />
            </pattern>
          </defs>
          <rect width="100%" height="100%" fill="url(#grid)" />
          <rect x="931" y="170" width="340" height="14" fill="#cfcfcf" />
          <rect x="931" y="184" width="340" height="573" fill="#fefefe" />
          <rect x="931" y="184" width="340" height="573" fill="url(#grid-small)" />
        </svg>
        <PhoneFrame />
        <PreviewPhone />
        <i className="absolute right-[4px] top-[411px] h-[108px] w-[9px] rounded-sm bg-[#cfcfcf]" />
        <i className="absolute bottom-[3px] left-[565px] h-[9px] w-[108px] rounded-sm bg-[#cfcfcf]" />
      </div>
    </div>
  </main>
);

const Heading = ({ children }: { children: React.ReactNode }) => (
  <button className="flex h-[20px] shrink-0 items-center gap-[6px] whitespace-nowrap text-[14px] text-[#8b8b8b]">
    {children}
    <svg width="7" height="9" viewBox="0 0 7 9"><path d="M0 0h7L3.500 7z" fill="#777" /></svg>
  </button>
);

const Swatch = ({ label, color }: { label: string; color?: string }) => (
  <button className="flex w-[78px] flex-col items-center text-[14px] leading-5 text-[#3c3c3c]">
    <span className="mb-[4px] flex h-[28px] w-[44px] items-center justify-center rounded-sm border border-[#ccc]">
      <svg width="36" height="20" viewBox="0 0 36 20">
        <path d="M1 1h34v18H1z" fill={color ?? '#fff'} stroke="#999" strokeWidth="1.400" />
        {!color && <path d="M2 18L34 2" stroke="#aaa" strokeWidth="1.500" />}
      </svg>
    </span>
    {label}
  </button>
);

const fieldClass = 'border-b-2 border-[#a8a8a8] bg-transparent text-[19px] text-[#3c3c3c] outline-none placeholder:text-[#c9c9c9]';

const RightPanel = () => (
  <aside className="flex w-[360px] shrink-0 flex-col overflow-hidden border-l border-[#d2d2d2] bg-white text-[#3c3c3c]">
    <div className="flex h-[51px] shrink-0 items-end justify-between border-b border-[#cfcfcf] bg-[#fafafa] pl-[20px] pr-[22px] text-[17px]">
      <button className="border-b-4 border-[#4f7fc4] pb-[2px] font-semibold leading-7 text-[#4a86d0]">样式</button>
      <button className="pb-[6px] leading-7">交互</button>
      <button className="pb-[6px] leading-7">说明</button>
    </div>
    <div className="shrink-0 border-b border-[#dedede] pl-[21px]">
      <input aria-label="矩形名称" placeholder="(矩形名称)" className="h-[60px] w-full pt-[4px] text-[25px] outline-none placeholder:text-[#cdc5c8]" />
    </div>
    <div className="min-h-0 flex-1 overflow-hidden">
      <section className="flex h-[92px] flex-col border-b-2 border-[#e4e4e4] pl-[21px] pr-[21px]">
        <div className="-mt-[15px] flex">
          <input aria-label="X" defaultValue="147" className={`h-[26px] w-[84px] ${fieldClass}`} />
          <input aria-label="Y" defaultValue="30" className={`ml-[53px] h-[26px] w-[84px] ${fieldClass}`} />
          <label className="ml-auto flex w-[60px] flex-col items-center text-[12px] leading-5">
            <input defaultValue="0" className={`h-[26px] w-[60px] ${fieldClass}`} />
            旋转
          </label>
        </div>
        <div className="mt-[8px] flex items-center">
          <input aria-label="宽" defaultValue="81" className={`h-[30px] w-[84px] ${fieldClass}`} />
          <span className="ml-[3px] w-[24px] text-[13px]">W</span>
          <Unlock />
          <input aria-label="高" defaultValue="22" className={`ml-[11px] h-[30px] w-[84px] ${fieldClass}`} />
          <span className="ml-[3px] text-[13px]">H</span>
          <button aria-label="适应宽度" className="ml-auto">
            <svg width="20" height="20" viewBox="0 0 20 20" fill="none" stroke="#888" strokeWidth="1.300"><path d="M3 1H1v18h2M17 1h2v18h-2M3 10h14M7 7l-4 3 4 3M13 7l4 3-4 3" /></svg>
          </button>
          <button aria-label="适应高度" className="ml-[11px] mr-[3px]">
            <svg width="20" height="20" viewBox="0 0 20 20" fill="none" stroke="#888" strokeWidth="1.300"><path d="M1 3V1h18v2M1 17v2h18v-2M10 3v14M7 7l3-4 3 4M7 13l3 4 3-4" /></svg>
          </button>
        </div>
      </section>
      <section className="flex h-[60px] items-center border-b border-[#e2e2e2] pb-[3px] pl-[21px] pr-[23px]">
        <h2 className="text-[24px] leading-8">Label*</h2>
        <div className="ml-auto flex flex-col text-[14px] leading-[23px]">
          <a href="#update" className="underline">更新</a>
          <a href="#create" className="underline">创建</a>
        </div>
        <button aria-label="管理样式" className="ml-[13px]"><EditStyleIcon /></button>
      </section>
      <section className="flex h-[55px] items-center border-b border-[#e2e2e2] pl-[21px] pr-[22px]">
        <Heading>不透明性</Heading>
        <input
          type="range"
          aria-label="不透明性"
          defaultValue={100}
          className="ml-auto h-[4px] w-[138px] appearance-none rounded bg-[#5b8cc8] [&::-webkit-slider-thumb]:h-[14px] [&::-webkit-slider-thumb]:w-[14px] [&::-webkit-slider-thumb]:appearance-none [&::-webkit-slider-thumb]:rounded-full [&::-webkit-slider-thumb]:border-2 [&::-webkit-slider-thumb]:border-[#888] [&::-webkit-slider-thumb]:bg-white"
        />
        <input aria-label="不透明度" defaultValue="100%" className={`ml-[15px] h-[28px] w-[67px] ${fieldClass}`} />
      </section>
      <section className="h-[280px] border-b border-[#e2e2e2] pl-[21px] pr-[21px] pt-[17px]">
        <Heading>排版</Heading>
        <div className="mt-[14px] flex h-[33px] items-center border-b-2 border-[#b0b0b0]">
          <select aria-label="字体" className="w-full appearance-none bg-transparent text-[18px] outline-none"><option>苹方-简</option></select>
          <svg width="10" height="6" viewBox="0 0 10 6" className="mr-[2px] mt-2"><path d="M0 1l5 4 5-4" stroke="#bbb" fill="none" /></svg>
        </div>
        <div className="mt-[19px] flex items-end">
          <div className="flex h-[31px] w-[160px] items-center border-b-2 border-[#b0b0b0]">
            <select aria-label="字重" className="w-full appearance-none bg-transparent text-[18px] outline-none"><option>Light</option></select>
            <svg width="10" height="18" viewBox="0 0 10 18" fill="none" stroke="#bbb"><path d="M0 5l5-4 5 4M0 13l5 4 5-4" /></svg>
          </div>
          <input aria-label="字号" defaultValue="16" className={`ml-[38px] h-[31px] w-[54px] ${fieldClass}`} />
          <button aria-label="字体颜色" className="ml-auto flex h-[28px] w-[44px] items-center justify-center rounded-sm border border-[#ccc]"><i className="h-[19px] w-[36px] bg-[#333]" /></button>
        </div>
        <div className="mt-[20px] flex">
          <label className="flex flex-col items-center gap-[2px] text-[14px] leading-6">
            <input placeholder="22 (auto)" className={`h-[31px] w-[81px] ${fieldClass}`} />
            行间距
          </label>
          <label className="ml-[23px] flex flex-col items-center gap-[2px] text-[14px] leading-6">
            <input placeholder="0" className={`h-[31px] w-[51px] ${fieldClass}`} />
            字间距
          </label>
          <button aria-label="大小写" className="ml-[38px] mt-[27px] h-[24px] border-b-2 border-[#999] text-[17px] leading-[22px] text-[#777]">Aa</button>
          <button aria-label="文字阴影" className="ml-[12px] mt-[30px] self-start">
            <svg width="21" height="20" viewBox="0 0 21 20"><path d="M10 5h6l5 4v11h-9l-4-4z" fill="#d4d4d4" /><path d="M0 0h15v4H9v13H5V4H0z" fill="#8f8f8f" /></svg>
          </button>
        </div>
        <div className="mt-[23px] flex items-center gap-[12px] pl-[4px]">
          <AlignButton kind="left" label="左对齐" on />
          <AlignButton kind="center" label="居中对齐" />
          <AlignButton kind="right" label="右对齐" />
          <AlignButton kind="justify" label="两端对齐" />
          <div className="ml-auto flex gap-[10px] pr-[34px]">
            <AlignButton kind="top" label="顶部对齐" on />
            <AlignButton kind="middle" label="垂直居中" />
            <AlignButton kind="bottom" label="底部对齐" />
          </div>
        </div>
      </section>
      <section className="flex h-[84px] border-b border-[#e2e2e2] pl-[21px] pt-[16px]">
        <div className="w-[99px]"><Heading>填充</Heading></div>
        <Swatch label="颜色" />
        <Swatch label="图片" />
      </section>
      <section className="h-[158px] border-b border-[#e2e2e2] pl-[21px] pt-[16px]">
        <div className="flex">
          <div className="w-[99px] pt-[2px]"><Heading>线段</Heading></div>
          <Swatch label="颜色" color="#7d7d7d" />
          <label className="flex w-[72px] flex-col items-center gap-[5px] text-[14px] leading-5">
            <input defaultValue="0" className={`h-[27px] w-[44px] ${fieldClass}`} />
            线宽
          </label>
          <button className="flex w-[46px] flex-col items-center gap-[8px] pt-[6px] text-[14px] leading-5"><DashLines />类型</button>
        </div>
        <div className="mt-[26px] flex justify-end pr-[7px]">
          <button className="flex w-[78px] flex-col items-center gap-[7px] text-[14px] leading-5">
            <svg width="22" height="22" viewBox="0 0 22 22" fill="none" stroke="#777" strokeWidth="2"><path d="M2 18V2h18v16" strokeDasharray="3 2" /><path d="M1 20h20" strokeWidth="2.600" /></svg>
            可见性
          </button>
          <button className="flex w-[78px] flex-col items-center gap-[9px] pt-[2px] text-[14px] leading-5"><Arrows />箭头样式</button>
        </div>
      </section>
      <section className="flex h-[82px] border-b border-[#e2e2e2] pl-[21px] pt-[16px]">
        <div className="w-[99px]"><Heading>阴影</Heading></div>
        <Swatch label="外部" />
        <Swatch label="内部" />
      </section>
      <section className="flex pl-[21px] pt-[18px]">
        <div className="w-[99px]"><Heading>圆角</Heading></div>
        <label className="flex w-[78px] flex-col items-center gap-[5px] text-[14px] leading-5">
          <input defaultValue="0" className={`h-[27px] w-[44px] ${fieldClass}`} />
          半径
        </label>
        <button className="flex w-[78px] flex-col items-center gap-[8px] pt-[4px] text-[14px] leading-5">
          <svg width="20" height="20" viewBox="0 0 20 20" fill="none" stroke="#888" strokeWidth="1.400"><path d="M19 1v18H1v-8C1 4 5 1 11 1z" /></svg>
          可见性
        </button>
      </section>
    </div>
  </aside>
);

export default function App() {
  return (
    <div className="flex h-screen min-h-[700px] flex-col overflow-hidden bg-black pb-[31px] pl-[110px] pr-[111px] font-['Open_Sans','Noto_Sans_CJK_SC',sans-serif]">
      <MenuBar />
      <div className="flex min-h-0 flex-1 flex-col bg-[#1d325c]">
        <div className="flex min-h-0 flex-1 flex-col overflow-hidden rounded-t-[8px]">
          <TitleBar />
          <Toolbar />
          <FormatBar />
          <div className="flex min-h-0 flex-1 overflow-hidden bg-[#b2b0b2]">
            <div className="flex min-w-0 flex-1 overflow-hidden rounded-b-[8px]">
              <LeftPanel />
              <Canvas />
              <RightPanel />
            </div>
          </div>
        </div>
        <div className="h-[15px] shrink-0 bg-gradient-to-b from-[#9b999b] to-[#c6c2c4]" />
        <div className="flex h-[11px] shrink-0 gap-[12px] bg-[#cfcccc]">
          <div className="flex-1 bg-[#2950ae]" />
          <div className="w-[210px] bg-[#a52c24]" />
        </div>
      </div>
    </div>
  );
}
